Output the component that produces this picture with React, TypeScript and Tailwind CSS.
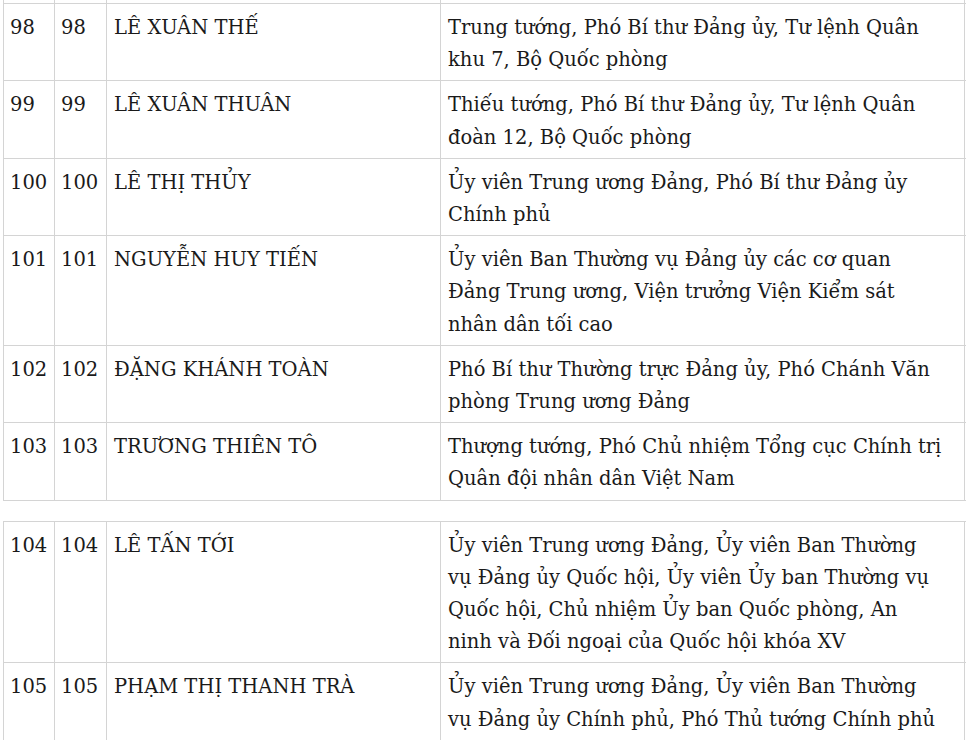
type Row = { stt: string; no: string; name: string; desc: string[] };

const TABLE_ONE: Row[] = [
  {
    stt: '98',
    no: '98',
    name: 'LÊ XUÂN THẾ',
    desc: ['Trung tướng, Phó Bí thư Đảng ủy, Tư lệnh Quân', 'khu 7, Bộ Quốc phòng'],
  },
  {
    stt: '99',
    no: '99',
    name: 'LÊ XUÂN THUÂN',
    desc: ['Thiếu tướng, Phó Bí thư Đảng ủy, Tư lệnh Quân', 'đoàn 12, Bộ Quốc phòng'],
  },
  {
    stt: '100',
    no: '100',
    name: 'LÊ THỊ THỦY',
    desc: ['Ủy viên Trung ương Đảng, Phó Bí thư Đảng ủy', 'Chính phủ'],
  },
  {
    stt: '101',
    no: '101',
    name: 'NGUYỄN HUY TIẾN',
    desc: [
      'Ủy viên Ban Thường vụ Đảng ủy các cơ quan',
      'Đảng Trung ương, Viện trưởng Viện Kiểm sát',
      'nhân dân tối cao',
    ],
  },
  {
    stt: '102',
    no: '102',
    name: 'ĐẶNG KHÁNH TOÀN',
    desc: ['Phó Bí thư Thường trực Đảng ủy, Phó Chánh Văn', 'phòng Trung ương Đảng'],
  },
  {
    stt: '103',
    no: '103',
    name: 'TRƯƠNG THIÊN TÔ',
    desc: ['Thượng tướng, Phó Chủ nhiệm Tổng cục Chính trị', 'Quân đội nhân dân Việt Nam'],
  },
];

const TABLE_TWO: Row[] = [
  {
    stt: '104',
    no: '104',
    name: 'LÊ TẤN TỚI',
    desc: [
      'Ủy viên Trung ương Đảng, Ủy viên Ban Thường',
      'vụ Đảng ủy Quốc hội, Ủy viên Ủy ban Thường vụ',
      'Quốc hội, Chủ nhiệm Ủy ban Quốc phòng, An',
      'ninh và Đối ngoại của Quốc hội khóa XV',
    ],
  },
  {
    stt: '105',
    no: '105',
    name: 'PHẠM THỊ THANH TRÀ',
    desc: ['Ủy viên Trung ương Đảng, Ủy viên Ban Thường', 'vụ Đảng ủy Chính phủ, Phó Thủ tướng Chính phủ'],
  },
];

const GRID = 'grid grid-cols-[52px_52px_334px_524px]';
const CELL = 'border-r border-[#d4d4d4] px-[6px] pt-[8px] pb-[4px] whitespace-nowrap';

function TableRow({ row, last }: { row: Row; last?: boolean }) {
  return (
    <div className={`${GRID} border-t border-[#d4d4d4] ${last ? 'border-b' : ''}`}>
      <div className={`${CELL} border-l`}>{row.stt}</div>
      <div className={CELL}>{row.no}</div>
      <div className={`${CELL} pl-[7px]`}>{row.name}</div>
      <div className={`${CELL} pl-[7px]`}>
        {row.desc.map((line) => (
          <div key={line}>{line}</div>
        ))}
      </div>
    </div>
  );
}

export default function App() {
  return (
    <div
      className="h-[743px] w-[966px] overflow-hidden bg-white pl-[3px] text-[19.5px] leading-[32.2px] text-[#1a1a1a]"
      style={{ fontFamily: '"DejaVu Serif", "Liberation Serif", serif' }}
    >
      {/* tail of the row above, cut off by the screenshot */}
      <div className={`${GRID} h-[3px]`}>
        <div className="border-l border-r border-[#d4d4d4]" />
        <div className="border-r border-[#d4d4d4]" />
        <div className="border-r border-[#d4d4d4]" />
        <div className="border-r border-[#d4d4d4]" />
      </div>
      <div>
        {TABLE_ONE.map((row, i) => (
          <TableRow key={row.stt} row={row} last={i === TABLE_ONE.length - 1} />
        ))}
      </div>
      <div className="mt-[20px]">
        {TABLE_TWO.map((row) => (
          <TableRow key={row.stt} row={row} />
        ))}
      </div>
    </div>
  );
}
